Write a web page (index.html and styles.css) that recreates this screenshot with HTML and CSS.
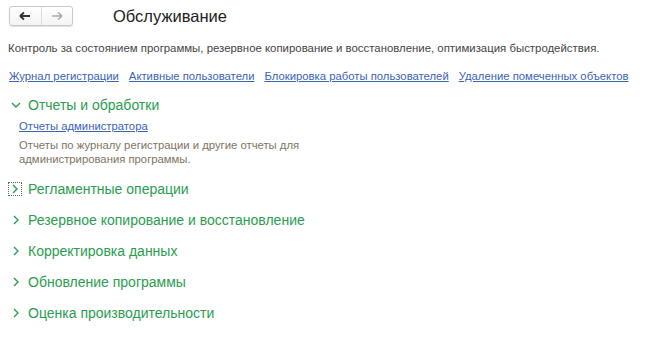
FILE: index.html
```html
<!DOCTYPE html>
<html lang="ru">
<head>
<meta charset="utf-8">
<link rel="stylesheet" href="styles.css">
</head>
<body>
<div class="page">
  <div class="header">
    <div class="nav">
      <div class="nav-btn">
        <svg width="12" height="10" viewBox="0 0 12 10"><path d="M1 5H11M1 5L5 1.5M1 5L5 8.5" stroke="#333" stroke-width="1.8" fill="none"/></svg>
      </div>
      <div class="nav-btn">
        <svg width="12" height="10" viewBox="0 0 12 10"><path d="M1 5H11M11 5L7 1.5M11 5L7 8.5" stroke="#aaa" stroke-width="1.6" fill="none"/></svg>
      </div>
    </div>
    <div class="title">Обслуживание</div>
  </div>
  <div class="desc">Контроль за состоянием программы, резервное копирование и восстановление, оптимизация быстродействия.</div>
  <div class="links">
    <a class="link">Журнал регистрации</a>
    <a class="link">Активные пользователи</a>
    <a class="link">Блокировка работы пользователей</a>
    <a class="link">Удаление помеченных объектов</a>
  </div>
  <div class="groups">
    <div class="group open">
      <div class="group-head">
        <span class="chev"><svg width="10" height="10" viewBox="0 0 10 10"><path d="M1 3L5 7L9 3" stroke="#2a9d4f" stroke-width="1.4" fill="none"/></svg></span>
        <span class="group-title">Отчеты и обработки</span>
      </div>
      <div class="group-body">
        <a class="link">Отчеты администратора</a>
        <div class="note">Отчеты по журналу регистрации и другие отчеты для<br>администрирования программы.</div>
      </div>
    </div>
    <div class="group">
      <div class="group-head">
        <span class="chev focus"><svg width="10" height="10" viewBox="0 0 10 10"><path d="M3 1L7 5L3 9" stroke="#2a9d4f" stroke-width="1.4" fill="none"/></svg></span>
        <span class="group-title">Регламентные операции</span>
      </div>
    </div>
    <div class="group">
      <div class="group-head">
        <span class="chev"><svg width="10" height="10" viewBox="0 0 10 10"><path d="M3 1L7 5L3 9" stroke="#2a9d4f" stroke-width="1.4" fill="none"/></svg></span>
        <span class="group-title">Резервное копирование и восстановление</span>
      </div>
    </div>
    <div class="group">
      <div class="group-head">
        <span class="chev"><svg width="10" height="10" viewBox="0 0 10 10"><path d="M3 1L7 5L3 9" stroke="#2a9d4f" stroke-width="1.4" fill="none"/></svg></span>
        <span class="group-title">Корректировка данных</span>
      </div>
    </div>
    <div class="group">
      <div class="group-head">
        <span class="chev"><svg width="10" height="10" viewBox="0 0 10 10"><path d="M3 1L7 5L3 9" stroke="#2a9d4f" stroke-width="1.4" fill="none"/></svg></span>
        <span class="group-title">Обновление программы</span>
      </div>
    </div>
    <div class="group">
      <div class="group-head">
        <span class="chev"><svg width="10" height="10" viewBox="0 0 10 10"><path d="M3 1L7 5L3 9" stroke="#2a9d4f" stroke-width="1.4" fill="none"/></svg></span>
        <span class="group-title">Оценка производительности</span>
      </div>
    </div>
  </div>
</div>
</body>
</html>
```
FILE: styles.css
```css
html, body {
  margin: 0;
  padding: 0;
  background: #fff;
}
body {
  font-family: "Liberation Sans", Arial, sans-serif;
  color: #333;
}
.page {
  display: flex;
  flex-direction: column;
  padding: 5px 0 0 9px;
}
.header {
  display: flex;
  align-items: center;
  gap: 40px;
  height: 21px;
}
.nav {
  display: flex;
  width: 64px;
  height: 20px;
  box-sizing: border-box;
  border: 1px solid #c8c8c8;
  border-radius: 3px;
  background: linear-gradient(#ffffff, #f4f4f4);
  box-shadow: 0 1px 1px rgba(0,0,0,0.12);
}
.nav-btn {
  flex: 1;
  display: flex;
  align-items: center;
  justify-content: center;
}
.nav-btn + .nav-btn {
  border-left: 1px solid #dcdcdc;
}
.title {
  font-size: 16.5px;
  color: #222;
  padding-top: 2px;
}
.desc {
  margin: 15px 0 0 -1px;
  font-size: 11.4px;
  line-height: 14px;
  color: #444;
  white-space: nowrap;
}
.links {
  display: flex;
  gap: 10px;
  margin-top: 14px;
  font-size: 11.3px;
  line-height: 14px;
  white-space: nowrap;
}
.link {
  color: #3b63b8;
  text-decoration: underline;
  text-underline-offset: 1px;
  cursor: pointer;
}
.groups {
  display: flex;
  flex-direction: column;
  margin-top: 13px;
}
.group-head {
  display: flex;
  align-items: center;
  height: 17px;
  margin-bottom: 14px;
}
.group.open .group-head {
  margin-bottom: 6px;
}
.chev {
  width: 14px;
  height: 14px;
  display: flex;
  align-items: center;
  justify-content: center;
  margin-right: 5px;
  box-sizing: border-box;
}
.chev.focus {
  border: 1px dotted #666;
  margin-left: -1px;
  margin-right: 6px;
}
.group-title {
  font-size: 14px;
  color: #2a9d4f;
  white-space: nowrap;
}
.group-body {
  display: flex;
  flex-direction: column;
  align-items: flex-start;
  padding-left: 10px;
  font-size: 11.3px;
  line-height: 14px;
  margin-bottom: 14px;
}
.note {
  margin-top: 5px;
  color: #7d7465;
}
```
